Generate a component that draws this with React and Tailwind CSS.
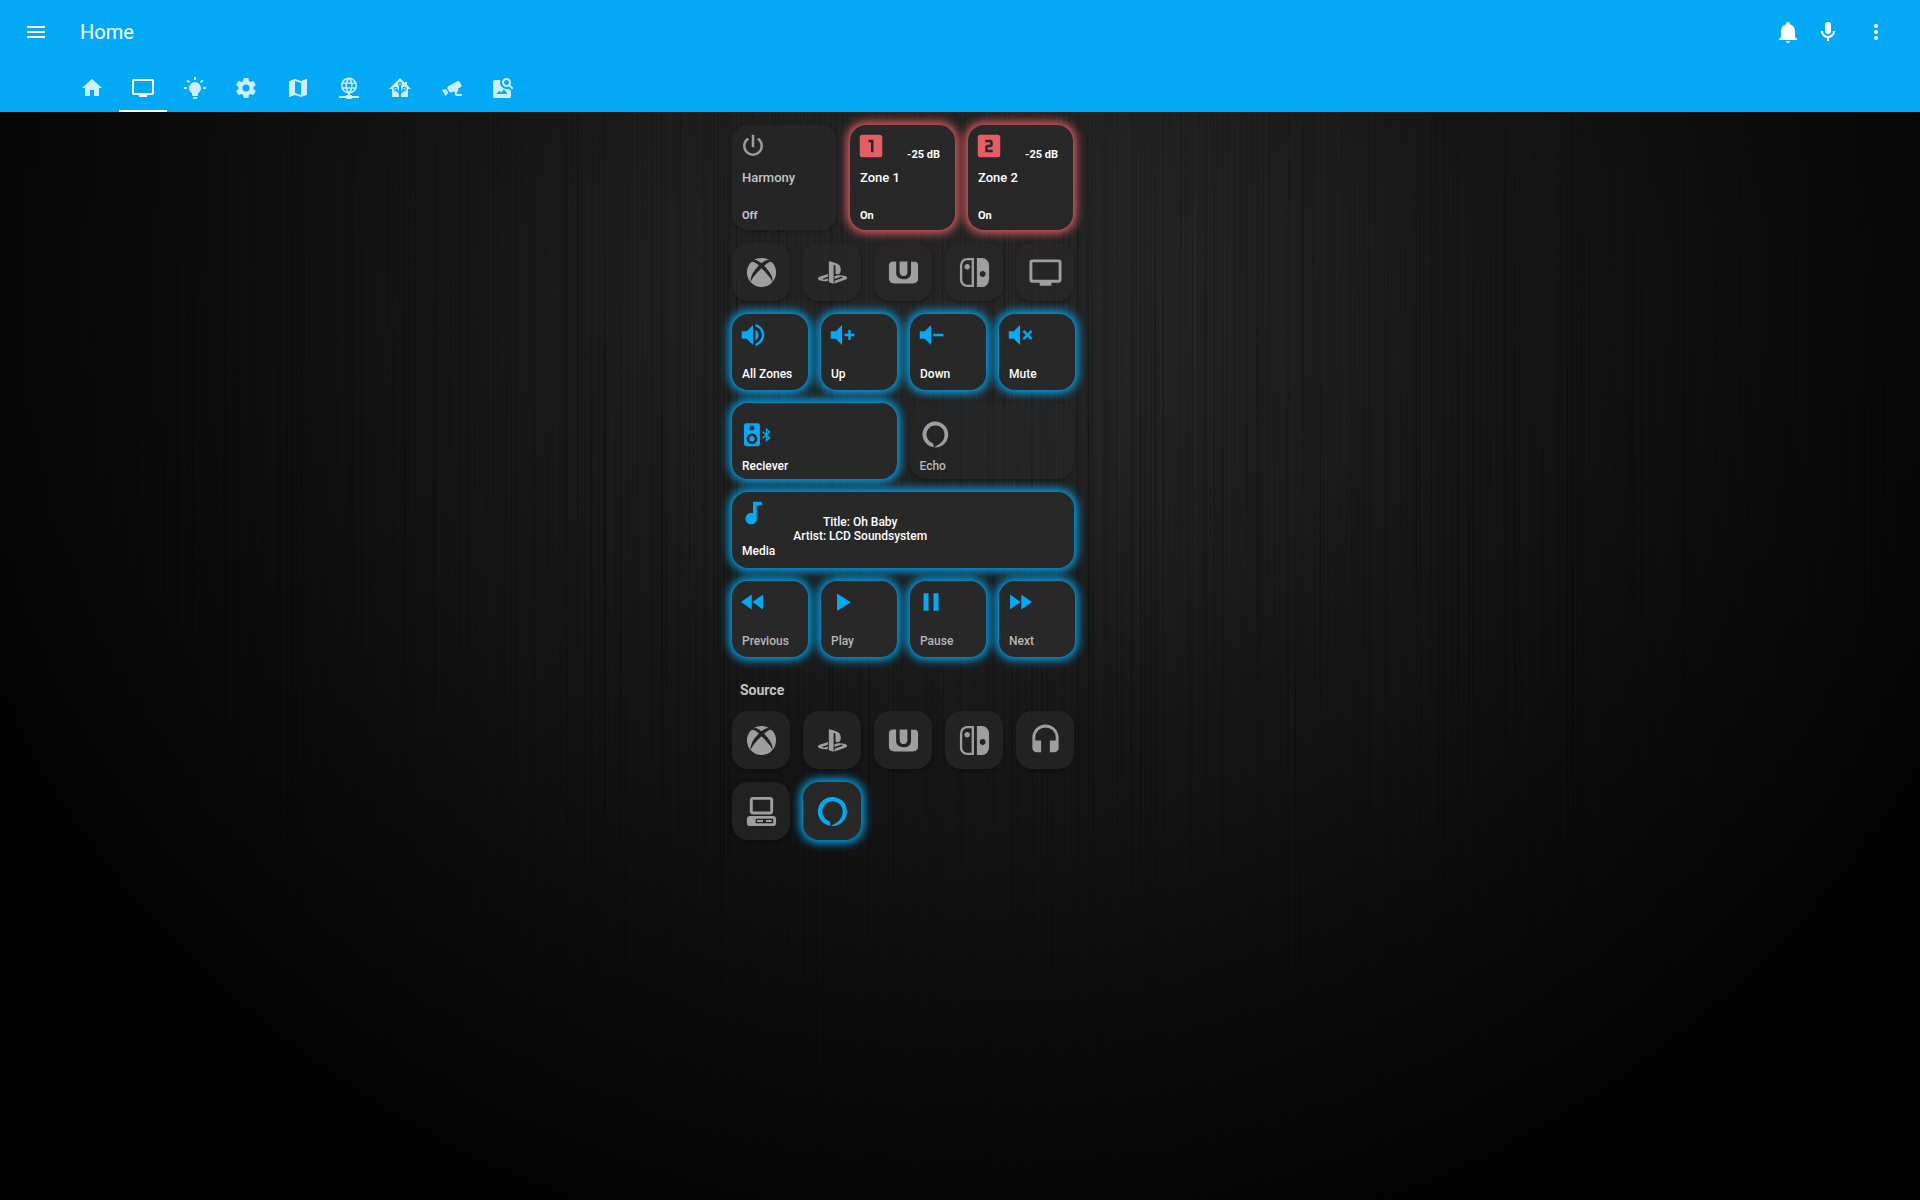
const P = {
  menu: "M3,6H21V8H3V6M3,11H21V13H3V11M3,16H21V18H3V16Z",
  home: "M10,20V14H14V20H19V12H22L12,3L2,12H5V20H10Z",
  tv: "M21,17H3V5H21M21,3H3A2,2 0 0,0 1,5V17A2,2 0 0,0 3,19H8V21H16V19H21A2,2 0 0,0 23,17V5A2,2 0 0,0 21,3Z",
  bulb: "M12,6A6,6 0 0,1 18,12C18,14.22 16.79,16.16 15,17.2V19A1,1 0 0,1 14,20H10A1,1 0 0,1 9,19V17.2C7.21,16.16 6,14.22 6,12A6,6 0 0,1 12,6M14,21V22A1,1 0 0,1 13,23H11A1,1 0 0,1 10,22V21H14M20,11H23V13H20V11M1,11H4V13H1V11M13,1V4H11V1H13M4.92,3.5L7.05,5.64L5.63,7.05L3.5,4.93L4.92,3.5M16.95,5.63L19.07,3.5L20.5,4.93L18.37,7.05L16.95,5.63Z",
  cog: "M12,15.5A3.5,3.5 0 0,1 8.5,12A3.5,3.5 0 0,1 12,8.5A3.5,3.5 0 0,1 15.5,12A3.5,3.5 0 0,1 12,15.5M19.43,12.97C19.47,12.65 19.5,12.33 19.5,12C19.5,11.67 19.47,11.34 19.43,11L21.54,9.37C21.73,9.22 21.78,8.95 21.66,8.73L19.66,5.27C19.54,5.05 19.27,4.96 19.05,5.05L16.56,6.05C16.04,5.66 15.5,5.32 14.87,5.07L14.5,2.42C14.46,2.18 14.25,2 14,2H10C9.75,2 9.54,2.18 9.5,2.42L9.13,5.07C8.5,5.32 7.96,5.66 7.44,6.05L4.95,5.05C4.73,4.96 4.46,5.05 4.34,5.27L2.34,8.73C2.21,8.95 2.27,9.22 2.46,9.37L4.57,11C4.53,11.34 4.5,11.67 4.5,12C4.5,12.33 4.53,12.65 4.57,12.97L2.46,14.63C2.27,14.78 2.21,15.05 2.34,15.27L4.34,18.73C4.46,18.95 4.73,19.03 4.95,18.95L7.44,17.94C7.96,18.34 8.5,18.68 9.13,18.93L9.5,21.58C9.54,21.82 9.75,22 10,22H14C14.25,22 14.46,21.82 14.5,21.58L14.87,18.93C15.5,18.67 16.04,18.34 16.56,17.94L19.05,18.95C19.27,19.03 19.54,18.95 19.66,18.73L21.66,15.27C21.78,15.05 21.73,14.78 21.54,14.63L19.43,12.97Z",
  map: "M15,19L9,16.89V5L15,7.11M20.5,3C20.44,3 20.39,3 20.34,3L15,5.1L9,3L3.36,4.9C3.15,4.97 3,5.15 3,5.38V20.5A0.5,0.5 0 0,0 3.5,21C3.55,21 3.61,21 3.66,20.97L9,18.9L15,21L20.64,19.1C20.85,19 21,18.85 21,18.62V3.5A0.5,0.5 0 0,0 20.5,3Z",
  web: "M16.36,14C16.44,13.34 16.5,12.68 16.5,12C16.5,11.32 16.44,10.66 16.36,10H19.74C19.9,10.64 20,11.31 20,12C20,12.69 19.9,13.36 19.74,14M14.59,19.56C15.19,18.45 15.65,17.25 15.97,16H18.92C17.96,17.65 16.43,18.93 14.59,19.56M14.34,14H9.66C9.56,13.34 9.5,12.68 9.5,12C9.5,11.32 9.56,10.65 9.66,10H14.34C14.43,10.65 14.5,11.32 14.5,12C14.5,12.68 14.43,13.34 14.34,14M12,19.96C11.17,18.76 10.5,17.43 10.09,16H13.91C13.5,17.43 12.83,18.76 12,19.96M8,8H5.08C6.03,6.34 7.57,5.06 9.4,4.44C8.8,5.55 8.35,6.75 8,8M5.08,16H8C8.35,17.25 8.8,18.45 9.4,19.56C7.57,18.93 6.03,17.65 5.08,16M4.26,14C4.1,13.36 4,12.69 4,12C4,11.31 4.1,10.64 4.26,10H7.64C7.56,10.66 7.5,11.32 7.5,12C7.5,12.68 7.56,13.34 7.64,14M12,4.03C12.83,5.23 13.5,6.57 13.91,8H10.09C10.5,6.57 11.17,5.23 12,4.03M18.92,8H15.97C15.65,6.75 15.19,5.55 14.59,4.44C16.43,5.07 17.96,6.34 18.92,8M12,2C6.47,2 2,6.5 2,12A10,10 0 0,0 12,22A10,10 0 0,0 22,12A10,10 0 0,0 12,2Z",
  assistant: "M21.8,13H20V21H13V17.67L15.79,14.88L16.5,15C17.66,15 18.6,14.06 18.6,12.9C18.6,11.74 17.66,10.8 16.5,10.8A2.1,2.1 0 0,0 14.4,12.9L14.5,13.61L13,15.13V9.65C13.66,9.29 14.1,8.6 14.1,7.8A2.1,2.1 0 0,0 12,5.7A2.1,2.1 0 0,0 9.9,7.8C9.9,8.6 10.34,9.29 11,9.65V15.13L9.5,13.61L9.6,12.9A2.1,2.1 0 0,0 7.5,10.8A2.1,2.1 0 0,0 5.4,12.9A2.1,2.1 0 0,0 7.5,15L8.21,14.88L11,17.67V21H4V13H2.25C1.83,13 1.42,13 1.42,12.79C1.43,12.57 1.85,12.15 2.28,11.72L11,3C11.33,2.67 11.67,2.33 12,2.33C12.33,2.33 12.67,2.67 13,3L17,7V6H19V9L21.78,11.78C22.18,12.18 22.59,12.59 22.6,12.8C22.6,13 22.2,13 21.8,13M7.5,12A0.9,0.9 0 0,1 8.4,12.9A0.9,0.9 0 0,1 7.5,13.8A0.9,0.9 0 0,1 6.6,12.9A0.9,0.9 0 0,1 7.5,12M16.5,12C17,12 17.4,12.4 17.4,12.9C17.4,13.4 17,13.8 16.5,13.8A0.9,0.9 0 0,1 15.6,12.9A0.9,0.9 0 0,1 16.5,12M12,6.9C12.5,6.9 12.9,7.3 12.9,7.8C12.9,8.3 12.5,8.7 12,8.7C11.5,8.7 11.1,8.3 11.1,7.8C11.1,7.3 11.5,6.9 12,6.9Z",
  cctv: "M18.15,4.94C17.77,4.91 17.37,5 17,5.2L8.35,10.2C7.39,10.76 7.07,12 7.62,12.94L9.12,15.53C9.67,16.5 10.89,16.82 11.85,16.27L13.65,15.23C13.92,15.69 14.32,16.06 14.81,16.27V18.04C14.81,19.13 15.7,20 16.81,20H22V18.04H16.81V16.27C17.72,15.87 18.31,14.97 18.31,14C18.31,13.54 18.19,13.11 17.97,12.73L20.5,11.27C21.47,10.71 21.8,9.5 21.24,8.53L19.74,5.94C19.4,5.34 18.79,5 18.15,4.94M6.22,13.17L2,13.87L2.75,15.17L4.75,18.63L5.5,19.93L8.22,16.63L6.22,13.17Z",
  imageSearch: "M15.5,9C16.2,9 16.79,8.76 17.27,8.27C17.76,7.79 18,7.2 18,6.5C18,5.83 17.76,5.23 17.27,4.73C16.79,4.23 16.2,4 15.5,4C14.83,4 14.23,4.23 13.73,4.73C13.23,5.23 13,5.83 13,6.5C13,7.2 13.23,7.79 13.73,8.27C14.23,8.76 14.83,9 15.5,9M19.31,8.91L22.41,12L21,13.41L17.86,10.31C17.08,10.78 16.28,11 15.47,11C14.22,11 13.16,10.58 12.3,9.7C11.45,8.83 11,7.77 11,6.5C11,5.27 11.45,4.2 12.33,3.33C13.2,2.45 14.27,2 15.5,2C16.77,2 17.83,2.45 18.7,3.33C19.58,4.2 20,5.27 20,6.5C20,7.33 19.78,8.13 19.31,8.91M16.5,18H5.5L8.25,14.5L10.22,16.83L12.94,13.31L16.5,18M18,13L20,15V20C20,20.55 19.81,21 19.41,21.4C19,21.79 18.53,22 18,22H4C3.45,22 3,21.79 2.6,21.4C2.21,21 2,20.55 2,20V6C2,5.47 2.21,5 2.6,4.59C3,4.19 3.45,4 4,4H9.5C9.2,4.64 9.03,5.31 9,6C8.96,8 9.6,9.7 10.9,11C12.2,12.3 13.8,12.96 15.5,13C16.3,13 17.2,12.8 18,13Z",
  bell: "M21,19V20H3V19L5,17V11C5,7.9 7.03,5.17 10,4.29C10,4.19 10,4.1 10,4A2,2 0 0,1 12,2A2,2 0 0,1 14,4C14,4.1 14,4.19 14,4.29C16.97,5.17 19,7.9 19,11V17L21,19M14,21A2,2 0 0,1 12,23A2,2 0 0,1 10,21",
  mic: "M12,2A3,3 0 0,1 15,5V11A3,3 0 0,1 12,14A3,3 0 0,1 9,11V5A3,3 0 0,1 12,2M19,11C19,14.53 16.39,17.44 13,17.93V21H11V17.93C7.61,17.44 5,14.53 5,11H7A5,5 0 0,0 12,16A5,5 0 0,0 17,11H19Z",
  dots: "M12,16A2,2 0 0,1 14,18A2,2 0 0,1 12,20A2,2 0 0,1 10,18A2,2 0 0,1 12,16M12,10A2,2 0 0,1 14,12A2,2 0 0,1 12,14A2,2 0 0,1 10,12A2,2 0 0,1 12,10M12,4A2,2 0 0,1 14,6A2,2 0 0,1 12,8A2,2 0 0,1 10,6A2,2 0 0,1 12,4Z",
  power: "M16.56,5.44L15.11,6.89C16.84,7.94 18,9.83 18,12A6,6 0 0,1 12,18A6,6 0 0,1 6,12C6,9.83 7.16,7.94 8.88,6.88L7.44,5.44C5.36,6.88 4,9.28 4,12A8,8 0 0,0 12,20A8,8 0 0,0 20,12C20,9.28 18.64,6.88 16.56,5.44M13,3H11V13H13",
  box1: "M14,17H12V9H10V7H14M19,3H5A2,2 0 0,0 3,5V19A2,2 0 0,0 5,21H19A2,2 0 0,0 21,19V5C21,3.89 20.1,3 19,3Z",
  box2: "M15,11C15,12.11 14.1,13 13,13H11V15H15V17H9V13C9,11.89 9.9,11 11,11H13V9H9V7H13A2,2 0 0,1 15,9M19,3H5A2,2 0 0,0 3,5V19A2,2 0 0,0 5,21H19A2,2 0 0,0 21,19V5C21,3.89 20.1,3 19,3Z",
  xbox: "M6.43,3.72C6.5,3.66 6.57,3.6 6.62,3.56C8.18,2.55 10,2 12,2C13.88,2 15.64,2.5 17.14,3.42C17.25,3.5 17.54,3.69 17.7,3.88C16.25,2.28 12,5.7 12,5.7C10.5,4.57 9.17,3.8 8.16,3.5C7.31,3.29 6.73,3.5 6.46,3.7M19.34,5.21C19.29,5.16 19.24,5.11 19.2,5.06C18.84,4.66 18.38,4.56 18,4.59C17.61,4.71 15.9,5.32 13.8,7.31C13.8,7.31 16.17,9.61 17.62,11.96C19.07,14.31 19.93,16.16 19.4,18.73C21,16.95 22,14.59 22,12C22,9.38 21,7 19.34,5.21M15.73,12.96C15.08,12.24 14.13,11.21 12.86,9.95C12.59,9.68 12.3,9.4 12,9.1C12,9.1 11.53,9.56 10.93,10.17C10.16,10.94 9.17,11.95 8.61,12.54C7.63,13.59 4.81,16.89 4.65,18.74C4.65,18.74 4,17.28 5.4,13.89C6.3,11.68 9,8.36 10.15,7.28C10.15,7.28 9.12,6.14 7.82,5.35L7.77,5.32C7.14,4.95 6.46,4.66 5.8,4.62C5.13,4.67 4.71,5.16 4.71,5.16C3.03,6.95 2,9.35 2,12A10,10 0 0,0 12,22C14.93,22 17.57,20.74 19.4,18.73C19.4,18.73 19.19,17.4 17.84,15.5C17.53,15.07 16.37,13.69 15.73,12.96Z",
  playstation: "M9.5,4.27C10.88,4.53 12.9,5.14 14,5.5C16.75,6.45 17.69,7.63 17.69,10.29C17.69,12.89 16.09,13.87 14.05,12.89V8.05C14.05,7.5 13.95,6.97 13.41,6.82C13,6.69 12.76,7.07 12.76,7.63V19.73L9.5,18.69V4.27M13.37,17.62L18.62,15.75C19.22,15.54 19.31,15.24 18.83,15.08C18.34,14.92 17.47,14.97 16.87,15.18L13.37,16.41V14.45L13.58,14.38C13.58,14.38 14.59,14 16,13.87C17.43,13.71 19.17,13.89 20.53,14.4C22.07,14.89 22.25,15.61 21.86,16.1C21.47,16.6 20.5,16.95 20.5,16.95L13.37,19.5V17.62M3.5,17.42C1.93,17 1.66,16.05 2.38,15.5C3.05,15 4.18,14.65 4.18,14.65L8.86,13V14.88L5.5,16.09C4.9,16.3 4.81,16.6 5.29,16.76C5.77,16.92 6.65,16.88 7.24,16.66L8.86,16.08V17.77L8.54,17.83C6.92,18.09 5.2,18 3.5,17.42Z",
  wiiu: "M2,15.96C2,18.19 3.54,19.5 5.79,19.5H18.57C20.47,19.5 22,18.2 22,16.32V6.97C22,5.83 21.15,4.6 20.11,4.6H17.15V12.3C17.15,18.14 6.97,18.09 6.97,12.41V4.5H4.72C3.26,4.5 2,5.41 2,6.85V15.96M9.34,11.23C9.34,15.74 14.66,15.09 14.66,11.94V4.5H9.34V11.23Z",
  nswitch: "M10.04,20.4H7.12C6.19,20.4 5.3,20 4.64,19.36C4,18.7 3.6,17.81 3.6,16.88V7.12C3.6,6.19 4,5.3 4.64,4.64C5.3,4 6.19,3.62 7.12,3.62H10.04V20.4M7.12,2A5.12,5.12 0 0,0 2,7.12V16.88C2,19.71 4.29,22 7.12,22H11.65V2H7.12M5.11,8C5.11,9.04 5.95,9.88 7,9.88C8.03,9.88 8.87,9.04 8.87,8C8.87,6.96 8.03,6.12 7,6.12C5.95,6.12 5.11,6.96 5.11,8M17.61,11C18.72,11 19.62,11.89 19.62,13C19.62,14.12 18.72,15 17.61,15C16.5,15 15.58,14.12 15.58,13C15.58,11.89 16.5,11 17.61,11M16.88,22A5.12,5.12 0 0,0 22,16.88V7.12C22,4.29 19.71,2 16.88,2H13.65V22H16.88Z",
  headphones: "M12,1C7,1 3,5 3,10V17A3,3 0 0,0 6,20H9V12H5V10A7,7 0 0,1 12,3A7,7 0 0,1 19,10V12H15V20H18A3,3 0 0,0 21,17V10C21,5 16.97,1 12,1Z",
  desktop: "M6,2C4.89,2 4,2.89 4,4V12C4,13.11 4.89,14 6,14H18C19.11,14 20,13.11 20,12V4C20,2.89 19.11,2 18,2H6M6,4H18V12H6V4M4,15C2.89,15 2,15.89 2,17V20C2,21.11 2.89,22 4,22H20C21.11,22 22,21.11 22,20V17C22,15.89 21.11,15 20,15H4M8,17H20V20H8V17M9,17.75V19.25H13V17.75H9M15,17.75V19.25H19V17.75H15Z",
  alexa: "M10.5,21.9A10,10 0 1 1 12,22L11,21.95C12,21 14.5,20 16,18.6C18,17 19,14.6 19,12A7,7 0 1 0 9,18.3C10,18.7 10.5,19 10.5,20Z",
  volHigh: "M14,3.23V5.29C16.89,6.15 19,8.83 19,12C19,15.17 16.89,17.84 14,18.7V20.77C18,19.86 21,16.28 21,12C21,7.72 18,4.14 14,3.23M16.5,12C16.5,10.23 15.5,8.71 14,7.97V16C15.5,15.29 16.5,13.76 16.5,12M3,9V15H7L12,20V4L7,9H3Z",
  volPlus: "M3,9H7L12,4V20L7,15H3V9M14,11H17V8H19V11H22V13H19V16H17V13H14V11Z",
  volMinus: "M3,9H7L12,4V20L7,15H3V9M14,11H22V13H14V11Z",
  volMute: "M3,9H7L12,4V20L7,15H3V9M16.59,12L14,9.41L15.41,8L18,10.59L20.59,8L22,9.41L19.41,12L22,14.59L20.59,16L18,13.41L15.41,16L14,14.59L16.59,12Z",
  note: "M12,3V12.26C11.5,12.09 11,12 10.5,12C8,12 6,14 6,16.5C6,19 8,21 10.5,21C13,21 15,19 15,16.5V6H19V3H12Z",
  rewind: "M11.5,12L20,18V6M11,18V6L2.5,12L11,18Z",
  play: "M8,5.14V19.14L19,12.14L8,5.14Z",
  pause: "M14,19H18V5H14M6,19H10V5H6V19Z",
  forward: "M13,6V18L21.5,12M4,18L12.5,12L4,6V18Z",
};

function Icon({ name, className = "size-6" }) {
  return (
    <svg viewBox="0 0 24 24" fill="currentColor" aria-hidden="true" className={`block shrink-0 ${className}`}>
      {name === "network" ? (
        <>
          <path transform="translate(2.4 0) scale(0.8)" d={P.web} />
          <path d="M11,17H13V19H14A1,1 0 0,1 15,20H22V22H15A1,1 0 0,1 14,23H10A1,1 0 0,1 9,22H2V20H9A1,1 0 0,1 10,19H11Z" />
        </>
      ) : name === "speaker" ? (
        <>
          <path
            fillRule="evenodd"
            d="M3.3,3.2H12.1A1.8,1.8 0 0,1 13.9,5V19.2A1.8,1.8 0 0,1 12.1,21H3.3A1.8,1.8 0 0,1 1.5,19.2V5A1.8,1.8 0 0,1 3.3,3.2ZM7.7,5.1A1.9,1.9 0 1 0 7.7,8.9A1.9,1.9 0 1 0 7.7,5.1ZM7.7,11.1A4.1,4.1 0 1 0 7.7,19.3A4.1,4.1 0 1 0 7.7,11.1ZM7.7,13.1A2.1,2.1 0 1 1 7.7,17.3A2.1,2.1 0 1 1 7.7,13.1Z"
          />
          <path d="M16,9.8L21.4,14.6L19,16.5V8.1L21.4,10L16,14.8" fill="none" stroke="currentColor" strokeWidth="1.1" />
        </>
      ) : (
        <path fillRule={name === "imageSearch" ? "evenodd" : "nonzero"} d={P[name]} />
      )}
    </svg>
  );
}

const TABS = [
  ["home", "Home"],
  ["tv", "Media"],
  ["bulb", "Lights"],
  ["cog", "Settings"],
  ["map", "Map"],
  ["network", "Network"],
  ["assistant", "Home Assistant"],
  ["cctv", "Cameras"],
  ["imageSearch", "Images"],
];

const TONES = {
  faint: "bg-[#282828]/50 text-[#9e9e9e] shadow-[0_2px_2px_rgba(0,0,0,0.14),0_1px_5px_rgba(0,0,0,0.12)]",
  off: "bg-[#282828]/70 text-[#9e9e9e] shadow-[0_2px_2px_rgba(0,0,0,0.14),0_1px_5px_rgba(0,0,0,0.12)]",
  blue: "bg-[#282828] text-[#03a9f4] shadow-[0_0_10px_3px_#03a9f4]",
  red: "bg-[#282828] text-[#e45e65] shadow-[0_0_10px_3px_#e45e65]",
};

function Card({ tone = "off", className = "", children, ...rest }) {
  return (
    <button type="button" className={`block rounded-2xl text-left ${TONES[tone]} ${className}`} {...rest}>
      {children}
    </button>
  );
}

function Tile({ icon, label, tone }) {
  return (
    <Card tone={tone} aria-label={label} className="aspect-square">
      <span className="flex h-full items-center justify-center">
        <Icon name={icon} className="size-[35px]" />
      </span>
    </Card>
  );
}

function ZoneCard({ icon, name, state, level, tone = "off" }) {
  const on = tone !== "off";
  return (
    <Card tone={tone} className="aspect-square">
      <span className={`flex h-full flex-col pb-1.5 ${on ? "text-white" : "text-[#c4c4c4]"}`}>
        <span className="flex h-9 justify-between pt-1.5 pr-[15px] pl-1.5">
          <Icon name={icon} className={`size-[30px] ${on ? "text-[#e45e65]" : "text-[#9e9e9e]"}`} />
          {level && <span className="pt-4 text-[11px] leading-4 font-bold">{level}</span>}
        </span>
        <span className="mt-[9px] px-2.5 text-[13px] leading-4 font-medium">{name}</span>
        <span className="mt-auto px-2.5 text-[11px] leading-4 font-bold">{state}</span>
      </span>
    </Card>
  );
}

function ControlCard({ icon, name, bright = false }) {
  return (
    <Card tone="blue" className="h-[76px]">
      <span className="flex h-full flex-col justify-between pt-1.5 pb-2">
        <Icon name={icon} className="ml-1.5 size-[30px]" />
        <span className={`px-2.5 text-xs leading-4 font-medium ${bright ? "text-white" : "text-[#b8b8b8]"}`}>{name}</span>
      </span>
    </Card>
  );
}

function DeviceCard({ icon, name, tone }) {
  return (
    <Card tone={tone} className="h-[76px]">
      <span className="flex h-full flex-col justify-between pt-4 pb-[5px]">
        <Icon name={icon} className="ml-2.5 size-[31px]" />
        <span className={`px-2.5 text-xs leading-4 font-medium ${tone === "blue" ? "text-white" : "text-[#b8b8b8]"}`}>
          {name}
        </span>
      </span>
    </Card>
  );
}

/* Brushed dark metal: a soft glow crossed by fine vertical grain. */
function Backdrop() {
  return (
    <div className="absolute inset-0 -z-10 bg-[radial-gradient(ellipse_56%_82%_at_51%_24%,#282828_0%,#242424_20%,#171717_48%,#0b0b0b_76%,#030303_100%)]">
      <svg className="h-full w-full opacity-40 mix-blend-multiply" aria-hidden="true">
        <filter id="grain" x="0" y="0" width="100%" height="100%">
          <feTurbulence type="fractalNoise" baseFrequency="0.6 0.001" numOctaves="2" seed="7" />
          <feColorMatrix values="2 0 0 0 -0.4  2 0 0 0 -0.4  2 0 0 0 -0.4  0 0 0 0 1" />
        </filter>
        <rect width="100%" height="100%" filter="url(#grain)" />
      </svg>
    </div>
  );
}

const CONSOLES = [
  ["xbox", "Xbox"],
  ["playstation", "PlayStation"],
  ["wiiu", "Wii U"],
  ["nswitch", "Switch"],
];

export default function App() {
  return (
    <div className="relative isolate flex min-h-screen flex-col bg-black font-[Roboto,sans-serif] text-white">
      <Backdrop />
      <header className="bg-[#03a9f4]">
        <div className="flex h-16 items-center pr-8 pl-6">
          <button type="button" aria-label="Menu">
            <Icon name="menu" />
          </button>
          <h1 className="ml-8 text-xl leading-6 font-normal">Home</h1>
          <div className="ml-auto flex items-center gap-4">
            <button type="button" aria-label="Notifications">
              <Icon name="bell" />
            </button>
            <button type="button" aria-label="Voice">
              <Icon name="mic" />
            </button>
            <button type="button" aria-label="More" className="ml-2 w-6">
              <Icon name="dots" />
            </button>
          </div>
        </div>
        <nav className="ml-[68px] flex h-12 max-w-[459px] justify-between">
          {TABS.map(([icon, label]) => (
            <a
              key={icon}
              href={`#${icon}`}
              aria-label={label}
              className={`flex w-12 items-center justify-center border-y-2 border-t-transparent ${
                icon === "tv" ? "border-b-white text-white" : "border-b-transparent text-white/80"
              }`}
            >
              <Icon name={icon} />
            </a>
          ))}
        </nav>
      </header>

      <main className="ml-[calc(50%-228px)] flex w-full max-w-[342px] flex-col gap-[13px] pt-[13px] pb-10">
        <div className="grid grid-cols-[repeat(3,105px)] gap-[13px]">
          <ZoneCard icon="power" name="Harmony" state="Off" />
          <ZoneCard icon="box1" name="Zone 1" state="On" level="-25 dB" tone="red" />
          <ZoneCard icon="box2" name="Zone 2" state="On" level="-25 dB" tone="red" />
        </div>
        <div className="grid grid-cols-5 gap-[13px]">
          {CONSOLES.map(([icon, label]) => (
            <Tile key={icon} icon={icon} label={label} />
          ))}
          <Tile icon="tv" label="TV" />
        </div>
        <div className="grid grid-cols-[repeat(4,76px)] gap-[13px]">
          <ControlCard icon="volHigh" name="All Zones" bright />
          <ControlCard icon="volPlus" name="Up" bright />
          <ControlCard icon="volMinus" name="Down" bright />
          <ControlCard icon="volMute" name="Mute" bright />
        </div>
        <div className="grid grid-cols-2 gap-[13px]">
          <DeviceCard icon="speaker" name="Reciever" tone="blue" />
          <DeviceCard icon="alexa" name="Echo" tone="faint" />
        </div>
        <Card tone="blue" className="h-[76px]">
          <span className="flex h-full pb-px">
            <span className="flex flex-col justify-between pt-1.5 pb-2">
              <Icon name="note" className="ml-1.5 size-[30px]" />
              <span className="pl-2.5 text-xs leading-4 font-medium text-white">Media</span>
            </span>
            <span className="ml-[18px] self-center pb-0.5 text-center text-xs leading-[14px] font-medium text-white">
              Title: Oh Baby
              <br />
              Artist: LCD Soundsystem
            </span>
          </span>
        </Card>
        <div className="grid grid-cols-[repeat(4,76px)] gap-[13px]">
          <ControlCard icon="rewind" name="Previous" />
          <ControlCard icon="play" name="Play" />
          <ControlCard icon="pause" name="Pause" />
          <ControlCard icon="forward" name="Next" />
        </div>
        <h2 className="pt-3 pl-2 text-sm leading-4 font-bold text-[#c4c4c4]">Source</h2>
        <div className="grid grid-cols-5 gap-[13px]">
          {CONSOLES.map(([icon, label]) => (
            <Tile key={icon} icon={icon} label={label} />
          ))}
          <Tile icon="headphones" label="Headphones" />
          <Tile icon="desktop" label="Computer" />
          <Tile icon="alexa" label="Echo" tone="blue" />
        </div>
      </main>
    </div>
  );
}
